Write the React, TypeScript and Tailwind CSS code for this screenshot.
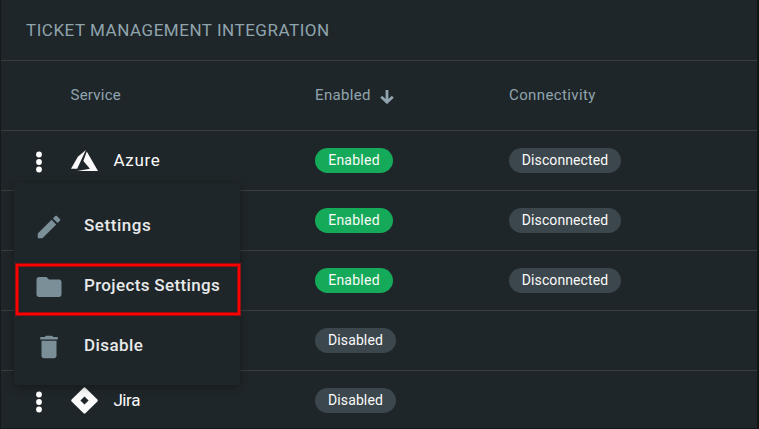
import type { ReactNode } from "react";

type Service = {
  name?: string;
  logo?: ReactNode;
  tracking?: string;
  enabled: boolean;
  connectivity?: string;
};

const AzureLogo = () => (
  <svg viewBox="0 0 24 24" className="size-[27px] fill-[#fafafa]">
    <path d="M5.483 21.3H24L14.025 4.013l-3.038 8.347 5.836 6.938L5.483 21.3zM13.23 2.7L6.105 8.677 0 19.253h5.505v.014L13.23 2.7z" />
  </svg>
);

const JiraLogo = () => (
  <svg viewBox="0 0 27 27" className="size-[27px] fill-[#fafafa]">
    <path
      fillRule="evenodd"
      d="M12.6.7Q13.5-.1 14.4.7L26.4 12.6Q27.2 13.5 26.4 14.4L14.4 26.3Q13.5 27.1 12.6 26.3L.6 14.4Q-.2 13.5.6 12.6ZM13.5 9.4L9.4 13.5L13.5 17.6L17.6 13.5Z"
    />
  </svg>
);

const services: Service[] = [
  { name: "Azure", logo: <AzureLogo />, tracking: "tracking-[0.7px]", enabled: true, connectivity: "Disconnected" },
  { enabled: true, connectivity: "Disconnected" },
  { enabled: true, connectivity: "Disconnected" },
  { enabled: false },
  { name: "Jira", logo: <JiraLogo />, tracking: "tracking-[-0.4px]", enabled: false },
];

const menuItems = [
  {
    label: "Settings",
    tracking: "tracking-[0.55px]",
    path: "M3 17.25V21h3.75L17.81 9.94l-3.75-3.75L3 17.25zM20.71 7.04c.39-.39.39-1.02 0-1.41l-2.34-2.34c-.39-.39-1.02-.39-1.41 0l-1.83 1.83 3.75 3.75 1.83-1.83z",
  },
  {
    label: "Projects Settings",
    tracking: "tracking-[0.35px]",
    path: "M10 4H4c-1.1 0-1.99.9-1.99 2L2 18c0 1.1.9 2 2 2h16c1.1 0 2-.9 2-2V8c0-1.1-.9-2-2-2h-8l-2-2z",
  },
  {
    label: "Disable",
    tracking: "tracking-[0.4px]",
    path: "M6 19c0 1.1.9 2 2 2h8c1.1 0 2-.9 2-2V7H6v12zM19 4h-3.5l-1-1h-5l-1 1H5v2h14V4z",
  },
];

function Badge({ label }: { label: string }) {
  const style =
    label === "Enabled"
      ? "w-[78px] bg-[#15aa59] tracking-[0.25px]"
      : label === "Disabled"
        ? "w-[81px] bg-[#3c474d] tracking-[0.1px]"
        : "w-28 bg-[#3c474d] tracking-[0.1px]";
  return (
    <span className={`flex h-[25px] items-center justify-center rounded-full pb-px text-sm text-[#fafafa] ${style}`}>
      {label}
    </span>
  );
}

function Row({ service }: { service: Service }) {
  return (
    <div className="flex h-[60px] shrink-0 items-center border-b border-[#383d40]">
      <div className="flex w-[314px] items-center">
        {service.name && (
          <>
            <svg viewBox="0 0 30 30" className="mt-[3px] ml-[23px] size-[30px] fill-white">
              <circle cx="15" cy="7.5" r="2.9" />
              <circle cx="15" cy="15" r="2.9" />
              <circle cx="15" cy="22.5" r="2.9" />
            </svg>
            <span className="ml-[17.4px]">{service.logo}</span>
            <span className={`ml-[15px] text-[17px] text-[#fafafa] ${service.tracking}`}>{service.name}</span>
          </>
        )}
      </div>
      <div className="w-[194px]">
        <Badge label={service.enabled ? "Enabled" : "Disabled"} />
      </div>
      {service.connectivity && <Badge label={service.connectivity} />}
    </div>
  );
}

export default function App() {
  return (
    <div className="relative flex h-[429px] w-[759px] flex-col overflow-hidden border-r-2 border-b border-l border-r-[#111516] border-b-[#15191c] border-l-[#15191b] bg-[#1f2629] font-['Roboto','Noto_Sans',sans-serif]">
      <h1 className="flex h-[61px] shrink-0 items-center border-b border-[#383d40] pt-px pl-[25px] text-[17px] tracking-[0.53px] text-[#90a4ae]">
        TICKET MANAGEMENT INTEGRATION
      </h1>
      <div className="flex h-[70px] shrink-0 items-center border-b border-[#383d40] text-[15px] text-[#90a4ae]">
        <span className="w-[314px] pl-[69.5px] tracking-[0.25px]">Service</span>
        <span className="flex w-[194px] items-center">
          <span className="w-[57px] tracking-[0.35px]">Enabled</span>
          <svg viewBox="0 0 14 14" className="mt-[3px] ml-2 size-3.5 fill-none stroke-[#90a4ae] stroke-[2.8]">
            <path d="M7 0V11M1.2 6.8L7 12.2L12.8 6.8" />
          </svg>
        </span>
        <span className="tracking-[0.38px]">Connectivity</span>
      </div>
      {services.map((service, i) => (
        <Row key={i} service={service} />
      ))}

      <div className="absolute top-[183px] left-[13px] flex h-[202px] w-[226px] flex-col rounded bg-[#1f2629] pt-3 shadow-[0_2px_8px_rgba(0,0,0,0.35)]">
        {menuItems.map((item) => (
          <div key={item.label} className="flex h-[60px] items-center pl-[19.5px]">
            <svg viewBox="0 0 24 24" className="mt-1 size-[30px] fill-[#7b8f99]">
              <path d={item.path} />
            </svg>
            <span className={`ml-[20.5px] pt-px text-[17px] font-medium whitespace-nowrap text-[#e8eaea] ${item.tracking}`}>
              {item.label}
            </span>
          </div>
        ))}
      </div>
      <div className="absolute top-[264px] left-[15px] h-[51px] w-[224px] border-2 border-[#ff0000] shadow-[0_0_0_1px_#950f11,inset_0_0_0_1px_#950f11]" />
    </div>
  );
}
